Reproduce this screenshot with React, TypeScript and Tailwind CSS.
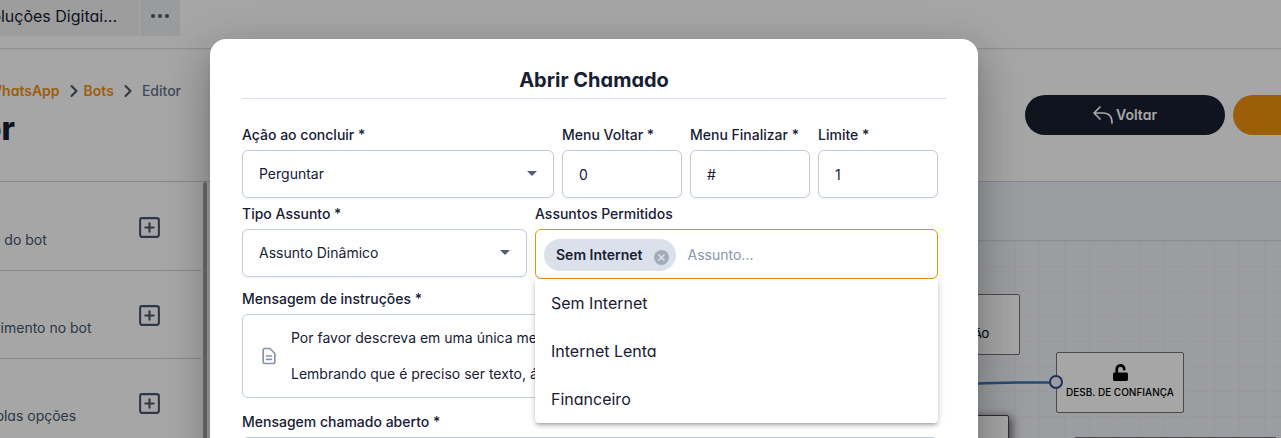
import React from 'react';
import { ChevronRight, SquarePlus } from 'lucide-react';
import { FaUnlock } from 'react-icons/fa';
import { HiOutlineDocumentText } from 'react-icons/hi';

const blocks = ['o do bot', 'dimento no bot', 'iplas opções'];

const subjects = ['Sem Internet', 'Internet Lenta', 'Financeiro'];

const instructions =
  'Por favor descreva em uma única mensagem o seu problema.\n\nLembrando que é preciso ser texto, áudio não é aceito.';

const labelClass = 'block text-sm leading-5 font-medium text-[#172033] [font-feature-settings:normal]';
const fieldClass =
  'block w-full h-12 rounded-md border border-[#c0cbdc] bg-white px-4 text-sm text-[#172033] shadow-xs outline-none [font-feature-settings:normal]';

interface FieldProps {
  id: string;
  label: string;
  value: string;
}

const TextField: React.FC<FieldProps> = ({ id, label, value }) => (
  <div className="w-[120px] shrink-0">
    <label htmlFor={id} className={labelClass}>
      {label}
    </label>
    <input id={id} defaultValue={value} className={`${fieldClass} mt-[5px]`} />
  </div>
);

const SelectField: React.FC<FieldProps & { className: string }> = ({ id, label, value, className }) => (
  <div className={className}>
    <label htmlFor={id} className={labelClass}>
      {label}
    </label>
    <div className="relative mt-[5px]">
      <select id={id} className={`${fieldClass} appearance-none`}>
        <option>{value}</option>
      </select>
      <svg
        className="pointer-events-none absolute top-[21px] right-[17px] h-[5px] w-[10px] text-[#4f5f7a]"
        viewBox="0 0 10 5"
        fill="currentColor"
      >
        <path d="M0 0h10L5 5z" />
      </svg>
    </div>
  </div>
);

const MessageField: React.FC<FieldProps> = ({ id, label, value }) => (
  <div>
    <label htmlFor={id} className={labelClass}>
      {label}
    </label>
    <div className="mt-[5px] flex items-center gap-3 rounded-md border border-[#c0cbdc] bg-white px-4 py-[14px]">
      <HiOutlineDocumentText className="h-5 w-5 shrink-0 text-[#8593ad]" />
      <textarea
        id={id}
        rows={3}
        defaultValue={value}
        className="block h-[54px] flex-1 resize-none overflow-hidden text-sm leading-[18px] text-[#172033] outline-none [font-feature-settings:normal]"
      />
    </div>
  </div>
);

const SubjectPicker: React.FC = () => (
  <div className="relative flex-1">
    <label htmlFor="assuntos" className={labelClass}>
      Assuntos Permitidos
    </label>
    <div className="mt-[5px] flex h-[50px] items-center gap-3 rounded-md border border-[#e8930c] bg-white px-2 pt-[2px]">
      <span className="flex h-8 shrink-0 items-center gap-[11px] rounded-full bg-[#dbe1eb] pr-[7px] pl-3 text-sm font-semibold text-[#172033]">
        Sem Internet
        <button type="button" aria-label="Remover Sem Internet" className="mt-[5px]">
          <svg className="h-[15px] w-[15px]" viewBox="0 0 15 15" fill="none">
            <circle cx="7.500" cy="7.500" r="7.500" fill="#a2abba" />
            <path d="m4.500 4.500 6 6m0-6-6 6" stroke="#dbe1eb" strokeWidth="1.500" />
          </svg>
        </button>
      </span>
      <input
        id="assuntos"
        placeholder="Assunto..."
        className="min-w-0 flex-1 text-sm outline-none placeholder:text-[#8896b0]"
      />
    </div>
    {/* Suggestions */}
    <ul className="absolute inset-x-0 top-full z-10 rounded-b bg-white shadow-[0_3px_3px_-2px_rgba(0,0,0,0.2),0_3px_4px_0_rgba(0,0,0,0.14),0_1px_8px_0_rgba(0,0,0,0.12)]">
      {subjects.map(subject => (
        <li key={subject} className="flex h-12 items-center px-4 text-base text-[#172033]">
          {subject}
        </li>
      ))}
    </ul>
  </div>
);

const TopBar: React.FC = () => (
  <header className="flex h-[49px] shrink-0 items-start border-b border-[#dcdcdc] shadow-xs">
    <button className="flex h-9 w-[139px] shrink-0 items-center justify-end overflow-hidden bg-[#f2f2f2] pr-[22px] pb-1 text-base whitespace-nowrap text-[#172033]">
      oluções Digitai...
    </button>
    <button
      aria-label="Mais abas"
      className="ml-px flex h-9 w-10 items-center justify-center gap-[3px] bg-[#ebeef0] pb-1"
    >
      <span className="h-1 w-1 rounded-full bg-[#475569]" />
      <span className="h-1 w-1 rounded-full bg-[#475569]" />
      <span className="h-1 w-1 rounded-full bg-[#475569]" />
    </button>
  </header>
);

const PageHeader: React.FC = () => (
  <div className="flex h-[132px] shrink-0 items-start justify-between">
    <div className="w-[181px] pt-8">
      <nav className="flex items-center justify-end text-sm leading-5 font-semibold whitespace-nowrap">
        <a href="#whatsapp" className="text-[#f1910f]">
          WhatsApp
        </a>
        <ChevronRight className="ml-1 h-5 w-5 shrink-0 text-[#475569]" strokeWidth={2.5} />
        <a href="#bots" className="text-[#f1910f]">
          Bots
        </a>
        <ChevronRight className="mx-1 h-5 w-5 shrink-0 text-[#475569]" strokeWidth={2.5} />
        <span className="font-medium text-[#64748b]">Editor</span>
      </nav>
      <h1 className="mt-2 flex h-10 w-[15px] items-center justify-end text-[32px] font-extrabold text-[#172033]">or</h1>
    </div>
    <div className="mt-[46px] flex gap-2">
      <button className="flex h-10 w-[200px] items-center justify-center gap-[3px] rounded-full bg-[#19202f] text-sm font-semibold text-white">
        <svg
          className="h-5 w-5"
          viewBox="0 0 20 20"
          fill="none"
          stroke="currentColor"
          strokeWidth="1.700"
          strokeLinecap="round"
          strokeLinejoin="round"
        >
          <path d="M7 2 1 8l6 6M1 8h9c6 0 9 4 9 10" />
        </svg>
        Voltar
      </button>
      <button aria-label="Salvar" className="h-10 w-12 rounded-l-full bg-[#f1910f]" />
    </div>
  </div>
);

const BlockList: React.FC = () => (
  <aside className="flex w-[210px] shrink-0 overflow-hidden border-t border-[#cbd5e1]">
    <ul className="w-[201px] shrink-0 pt-px">
      {blocks.map(block => (
        <li key={block} className="flex h-[88px] border-b border-[#cbd5e1]">
          <p className="-ml-2 w-[145px] shrink-0 pt-[47px] text-sm whitespace-nowrap text-[#475569]">{block}</p>
          <button aria-label="Adicionar bloco" className="h-fit pt-8 text-[#475569]">
            <SquarePlus className="h-[25px] w-[25px]" />
          </button>
        </li>
      ))}
    </ul>
    <div className="ml-[2px] w-1 shrink-0 rounded-t bg-[#a8a8a8]" />
  </aside>
);

const Canvas: React.FC = () => (
  <main className="flex flex-1 flex-col overflow-hidden border-t border-[#cbd5e1] bg-[#eff1f7]">
    <div className="h-[59px] shrink-0 border-b border-[#d3dbe8]" />
    <div className="relative flex-1 overflow-hidden bg-[linear-gradient(to_right,#ebebea_1px,transparent_1px),linear-gradient(to_bottom,#ebebea_1px,transparent_1px)] bg-[size:25px_25px] bg-[position:4px_0px] text-[10px] font-medium text-black [font-feature-settings:normal]">
      <div className="absolute top-[53px] left-[682px] flex h-[61px] w-32 items-end justify-center rounded-xs border border-[#777070] bg-white pb-3">
        FINALIZAÇÃO
      </div>
      <svg className="absolute top-[138px] left-[740px] h-2 w-[100px]" viewBox="0 0 100 8" fill="none">
        <path d="M0 6 Q50 3 100 3.500" stroke="#3a76b0" strokeWidth="2.500" />
      </svg>
      <div className="absolute top-[111px] left-[846px] flex h-[61px] w-32 flex-col items-center gap-[4px] rounded-xs border border-[#777070] bg-white pt-[11px]">
        <FaUnlock className="h-[17px] w-[15px]" />
        <span className="whitespace-nowrap">DESB. DE CONFIANÇA</span>
        <span className="absolute top-[22px] left-[-8px] h-[14px] w-[14px] rounded-full border-2 border-[#2f4d90] bg-[#eff1f7]" />
      </div>
      <div className="absolute top-[174px] left-[671px] h-[61px] w-32 rounded-xs border border-[#4a4444] bg-white shadow-[2px_2px_10px_#555]" />
      <div className="absolute top-[196px] left-[864px] h-[61px] w-[203px] rounded-xs border border-[#777070] bg-white" />
    </div>
  </main>
);

const TicketDialog: React.FC = () => (
  <section
    role="dialog"
    aria-labelledby="dialog-title"
    className="h-fit w-full max-w-3xl rounded-2xl bg-white px-8 pt-[26px] pb-8 shadow-[0_11px_15px_-7px_rgba(0,0,0,0.2),0_24px_38px_3px_rgba(0,0,0,0.14),0_9px_46px_8px_rgba(0,0,0,0.12)]"
  >
    <h2
      id="dialog-title"
      className="border-b border-[#d9e0ec] pb-[3px] text-center text-xl leading-[30px] font-bold text-[#172033]"
    >
      Abrir Chamado
    </h2>
    <form className="pt-[26px] pr-2">
      <div className="flex gap-2">
        <SelectField id="acao" label="Ação ao concluir *" value="Perguntar" className="flex-1" />
        <TextField id="voltar" label="Menu Voltar *" value="0" />
        <TextField id="finalizar" label="Menu Finalizar *" value="#" />
        <TextField id="limite" label="Limite *" value="1" />
      </div>
      <div className="mt-[6px] flex gap-2">
        <SelectField id="tipo" label="Tipo Assunto *" value="Assunto Dinâmico" className="w-[285px]" />
        <SubjectPicker />
      </div>
      <div className="mt-[10px] flex flex-col gap-[14px]">
        <MessageField id="instrucoes" label="Mensagem de instruções *" value={instructions} />
        <MessageField id="aberto" label="Mensagem chamado aberto *" value="" />
      </div>
    </form>
  </section>
);

const App: React.FC = () => (
  <div className="relative flex h-screen flex-col overflow-hidden bg-white font-['Inter',sans-serif] [font-feature-settings:'cv11']">
    <TopBar />
    <PageHeader />
    <div className="flex min-h-0 flex-1">
      <BlockList />
      <Canvas />
    </div>
    <div className="absolute inset-0 flex items-start justify-center overflow-hidden bg-black/35 pt-[39px] pr-[93px]">
      <TicketDialog />
    </div>
  </div>
);

export default App;
